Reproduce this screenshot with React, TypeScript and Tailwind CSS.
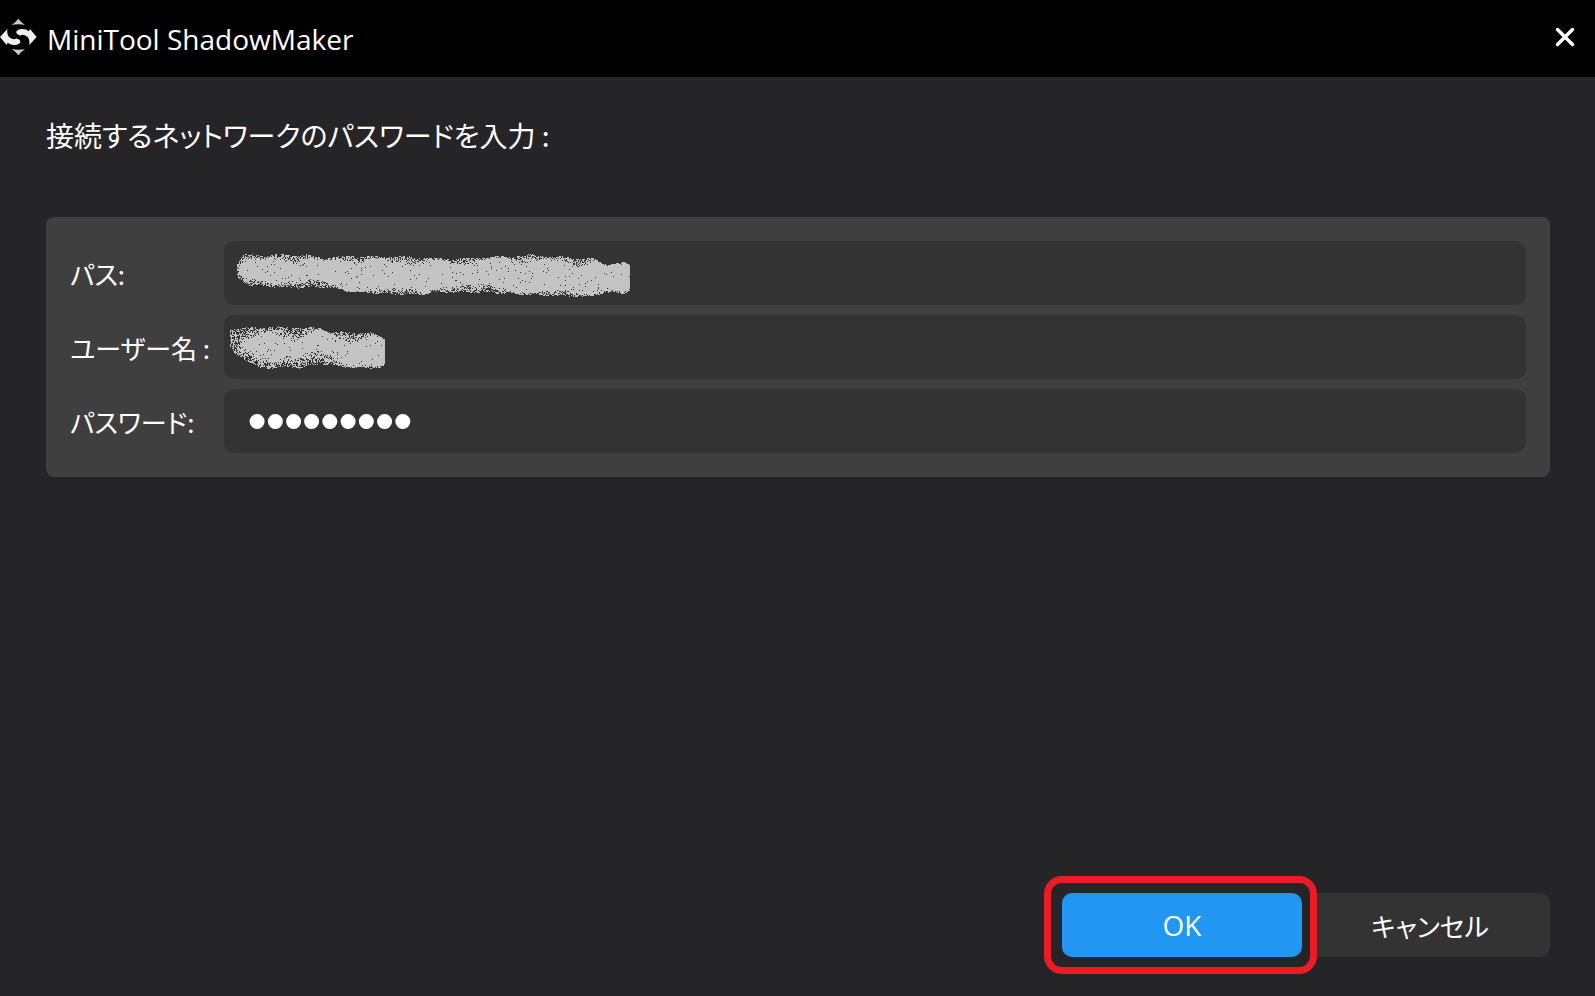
import { useMemo } from 'react';
import type { FC } from 'react';

type Point = [number, number];

const pathSmudge = {
  top: [[13, 23], [19, 14], [83, 14], [99, 17], [129, 15], [186, 16], [219, 18], [253, 17], [306, 14], [333, 16], [369, 18], [379, 23], [400, 22], [406, 25]] as Point[],
  bottom: [[13, 37], [23, 44], [66, 47], [99, 46], [129, 51], [189, 54], [219, 51], [273, 52], [306, 54], [363, 56], [379, 52], [400, 52], [406, 49]] as Point[],
};

const userSmudge = {
  top: [[6, 14], [39, 12], [96, 13], [106, 17], [146, 18], [158, 22], [161, 25]] as Point[],
  bottom: [[6, 32], [11, 40], [26, 47], [36, 54], [59, 52], [76, 53], [96, 49], [129, 53], [156, 53], [161, 50]] as Point[],
};

const edgeAt = (points: Point[], x: number) => {
  for (let i = 1; i < points.length; i++) {
    const [x0, y0] = points[i - 1];
    const [x1, y1] = points[i];
    if (x <= x1) return y0 + ((y1 - y0) * (x - x0)) / (x1 - x0);
  }
  return points[points.length - 1][1];
};

// Grainy brush stroke: solid in the middle, speckled towards the edges
const sprayPath = (top: Point[], bottom: Point[], soft: number, looseUntil: number) => {
  let seed = 7919;
  const random = () => {
    seed = (seed * 48271) % 2147483647;
    return seed / 2147483647;
  };
  const start = top[0][0];
  const end = top[top.length - 1][0];
  let d = '';
  for (let x = start; x < end; x++) {
    const y0 = Math.round(edgeAt(top, x) + 0.8 * Math.sin(x / 5));
    const y1 = Math.round(edgeAt(bottom, x) + 0.8 * Math.sin(x / 4 + 2));
    // the last dab is dense, without a speckled rim
    const fade = Math.min(1, (end - x) / 24);
    const upper = 1 + fade * soft * (1 + 0.6 * Math.sin(x / 9) + 0.3 * Math.sin(x / 23));
    const lower = 1 + fade * soft * (1 + 0.6 * Math.sin(x / 13 + 1) + 0.4 * Math.sin(x / 31));
    for (let y = y0; y < y1; y++) {
      const depth = Math.min((y - y0 + 1) / upper, (y1 - y) / lower);
      let chance = Math.min(0.98, 0.35 + 0.62 * depth);
      if (x < looseUntil) chance = Math.min(chance, 0.48);
      if (random() < chance) d += `M${x} ${y}h1v1h-1z`;
    }
  }
  return d;
};

interface SmudgeProps {
  top: Point[];
  bottom: Point[];
  soft: number;
  looseUntil?: number;
}

const Smudge: FC<SmudgeProps> = ({ top, bottom, soft, looseUntil = 0 }) => {
  const d = useMemo(() => sprayPath(top, bottom, soft, looseUntil), [top, bottom, soft, looseUntil]);
  return (
    <svg
      className="absolute left-0 top-0 pointer-events-none"
      width="420"
      height="64"
      shapeRendering="crispEdges"
      aria-hidden="true"
    >
      <path d={d} fill="#c3c3c3" />
    </svg>
  );
};

const Logo: FC = () => (
  <svg className="mb-1" width="37" height="38" viewBox="0 0 111 114" aria-hidden="true">
    <g fill="#c9c9c9">
      <path d="M35 21Q47 13 55 2Q63 13 75 21Q55 16 35 21Z" />
      <path d="M35 93Q55 98 75 93Q63 101 55 112Q47 101 35 93Z" />
    </g>
    <g fill="#f0f0f0">
      <path d="M0 57L22 33Q20 50 28 58Q35 64 44 64Q48 60 54 63Q64 68 60 75Q54 82 42 81Q32 81 23 74L20 81Z" />
      <path d="M110 57L88 81Q90 64 82 56Q75 50 66 50Q62 54 56 51Q46 46 50 39Q56 32 68 33Q78 33 87 40L90 33Z" />
    </g>
  </svg>
);

const inputClass =
  'block w-full h-16 rounded-[10px] bg-[#333333] px-6 text-white outline-none';

const App: FC = () => {
  return (
    <div className="min-h-screen flex flex-col bg-[#252527] text-white font-['Open_Sans','Noto_Sans_CJK_JP',sans-serif]">
      {/* Title bar */}
      <header className="flex items-center justify-between h-[77px] bg-black pr-5">
        <div className="flex items-center gap-[10px]">
          <Logo />
          <h1 className="text-[28px] leading-[38px]">MiniTool ShadowMaker</h1>
        </div>
        <button type="button" aria-label="閉じる" className="mb-1">
          <svg width="20" height="20" viewBox="0 0 20 20" stroke="white" strokeWidth="3.4" strokeLinecap="round" aria-hidden="true">
            <path d="M2.5 2.5L17.5 17.5M17.5 2.5L2.5 17.5" />
          </svg>
        </button>
      </header>

      <main className="flex-1 flex flex-col pl-[46px] pr-[45px] pt-[34px] pb-[39px] font-['Noto_Sans_CJK_JP',sans-serif] [font-feature-settings:'palt']">
        <h2 className="text-[28px] leading-[48px]">接続するネットワークのパスワードを入力 :</h2>

        <form className="mt-[58px] grid grid-cols-[154px_1fr] items-center gap-y-[10px] rounded-lg bg-[#3f3f3f] p-6 text-[26px]">
          <label htmlFor="path">パス:</label>
          <div className="relative">
            <input id="path" type="text" className={inputClass} />
            <Smudge {...pathSmudge} soft={5} />
          </div>

          <label htmlFor="user">ユーザー名 :</label>
          <div className="relative">
            <input id="user" type="text" className={inputClass} />
            <Smudge {...userSmudge} soft={9} looseUntil={16} />
          </div>

          <label htmlFor="password">パスワード:</label>
          <input
            id="password"
            type="password"
            defaultValue="123456789"
            className={`${inputClass} text-[52px] font-bold font-['Liberation_Sans',sans-serif]`}
          />
        </form>

        {/* Actions */}
        <div className="mt-auto flex justify-end gap-2 text-[26px]">
          <div className="relative">
            <button type="submit" className="block w-60 h-16 rounded-[10px] bg-[#2196f3] text-[28px] font-['Open_Sans',sans-serif]">
              OK
            </button>
            <div className="absolute -left-[18px] -right-[15px] -inset-y-[17px] z-10 rounded-[18px] border-[7px] border-[#ed1c24] pointer-events-none" />
          </div>
          <button type="button" className="w-60 h-16 rounded-[10px] bg-[#333333]">
            キャンセル
          </button>
        </div>
      </main>
    </div>
  );
};

export default App;
